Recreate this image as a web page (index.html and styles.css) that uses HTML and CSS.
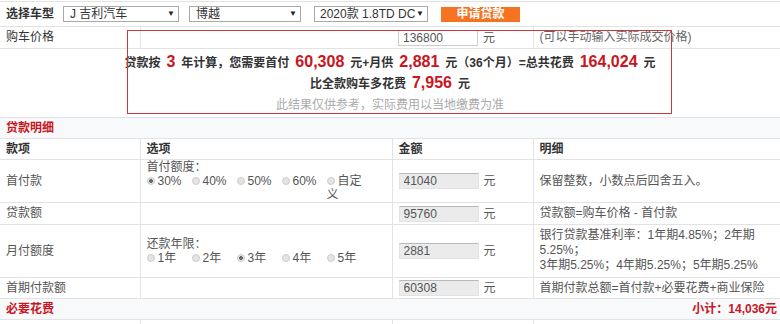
FILE: index.html
```html
<!DOCTYPE html>
<html lang="zh-CN">
<head>
    <meta charset="UTF-8">
    <title>贷款购车计算器</title>
    <link rel="stylesheet" href="styles.css">
</head>
<body>
    <div class="calc">
        <table class="loan-table">
            <colgroup>
                <col class="col-item">
                <col class="col-option">
                <col class="col-amount">
                <col class="col-detail">
            </colgroup>

            <tr class="pick-row">
                <td colspan="4">
                    <div class="pick">
                        <span class="pick-label">选择车型</span>
                        <div class="select select-brand"><span class="select-text">J 吉利汽车</span><span class="arrow">▼</span></div>
                        <div class="select select-series"><span class="select-text">博越</span><span class="arrow">▼</span></div>
                        <div class="select select-model"><span class="select-text">2020款 1.8TD DC</span><span class="arrow">▼</span></div>
                        <button class="apply-btn">申请贷款</button>
                    </div>
                </td>
            </tr>

            <tr class="price-row">
                <td class="label">购车价格</td>
                <td class="no-split-right"></td>
                <td class="no-split-left"><input class="price-input" value="136800"><span class="unit">元</span></td>
                <td class="note">(可以手动输入实际成交价格)</td>
            </tr>

            <tr class="result-row">
                <td colspan="4">
                    <div class="result-main">贷款按<span class="num">3</span>年计算，您需要首付<span class="num">60,308</span>元+月供<span class="num">2,881</span>元（36个月）=总共花费<span class="num">164,024</span>元</div>
                    <div class="result-main">比全款购车多花费<span class="num">7,956</span>元</div>
                    <div class="result-note">此结果仅供参考，实际费用以当地缴费为准</div>
                </td>
            </tr>

            <tr class="section">
                <td colspan="4">贷款明细</td>
            </tr>

            <tr class="head">
                <th>款项</th>
                <th>选项</th>
                <th>金额</th>
                <th>明细</th>
            </tr>

            <tr class="tall-a">
                <td>首付款</td>
                <td>
                    <div class="radio-block">
                        <div>首付额度：</div>
                        <div class="radio-group">
                            <div class="radio-item"><span class="radio checked"></span>30%</div>
                            <div class="radio-item"><span class="radio"></span>40%</div>
                            <div class="radio-item"><span class="radio"></span>50%</div>
                            <div class="radio-item"><span class="radio"></span>60%</div>
                            <div class="radio-item"><span class="radio"></span>自定义</div>
                        </div>
                    </div>
                </td>
                <td><input class="amount" value="41040" readonly><span class="unit">元</span></td>
                <td>保留整数，小数点后四舍五入。</td>
            </tr>

            <tr>
                <td>贷款额</td>
                <td></td>
                <td><input class="amount" value="95760" readonly><span class="unit">元</span></td>
                <td>贷款额=购车价格 - 首付款</td>
            </tr>

            <tr class="tall-b">
                <td>月付额度</td>
                <td>
                    <div class="radio-block">
                        <div>还款年限：</div>
                        <div class="radio-group">
                            <div class="radio-item"><span class="radio"></span>1年</div>
                            <div class="radio-item"><span class="radio"></span>2年</div>
                            <div class="radio-item"><span class="radio checked"></span>3年</div>
                            <div class="radio-item"><span class="radio"></span>4年</div>
                            <div class="radio-item"><span class="radio"></span>5年</div>
                        </div>
                    </div>
                </td>
                <td><input class="amount" value="2881" readonly><span class="unit">元</span></td>
                <td class="rates">银行贷款基准利率：1年期4.85%；2年期5.25%；<br>3年期5.25%；4年期5.25%；5年期5.25%</td>
            </tr>

            <tr>
                <td>首期付款额</td>
                <td></td>
                <td><input class="amount" value="60308" readonly><span class="unit">元</span></td>
                <td>首期付款总额=首付款+必要花费+商业保险</td>
            </tr>

            <tr class="section">
                <td colspan="4">
                    <div class="section-bar">
                        <span>必要花费</span>
                        <span>小计：14,036元</span>
                    </div>
                </td>
            </tr>

            <tr>
                <td></td>
                <td></td>
                <td></td>
                <td></td>
            </tr>
        </table>

        <div class="result-frame"></div>
    </div>
</body>
</html>
```

FILE: styles.css
```css
* {
    box-sizing: border-box;
}

body {
    margin: 0;
    font-family: "Liberation Sans", "Noto Sans CJK TC", sans-serif;
    font-size: 12px;
    color: #555;
    background: #fff;
}

.calc {
    position: relative;
    padding-top: 1px;
}

.loan-table {
    width: 780px;
    border-collapse: collapse;
    table-layout: fixed;
}

.col-item { width: 140px; }
.col-option { width: 252px; }
.col-amount { width: 141px; }
.col-detail { width: 247px; }

.loan-table td,
.loan-table th {
    border: 1px solid #e3e3e3;
    padding: 0 6px;
    height: 20px;
    line-height: 20px;
    text-align: left;
    vertical-align: middle;
    font-weight: normal;
}

.loan-table tr > :first-child {
    border-left: none;
}

.loan-table tr > :last-child {
    border-right: none;
}

/* top row: car picker */
.pick-row td {
    height: 25px;
}

.pick {
    display: flex;
    align-items: center;
}

.pick-label {
    width: 57px;
    font-weight: bold;
    color: #333;
}

.select {
    display: flex;
    align-items: center;
    height: 16px;
    padding: 0 3px 0 6px;
    border: 1px solid #a9a9a9;
    background: #fff;
    color: #333;
    line-height: 14px;
    white-space: nowrap;
}

.select-text {
    flex: 1;
    overflow: hidden;
}

.arrow {
    flex: none;
    margin-left: 2px;
    font-size: 8px;
    color: #222;
}

.select-brand { width: 116px; }
.select-series { width: 112px; margin-left: 10px; }
.select-model { width: 114px; margin-left: 13px; padding-left: 5px; }
.select-model .arrow { margin-left: 0; }

.apply-btn {
    width: 79px;
    height: 15px;
    margin-left: 13px;
    padding: 0;
    border: none;
    background: #f57321;
    color: #fff;
    font: bold 12px "Liberation Sans", "Noto Sans CJK TC", sans-serif;
    line-height: 15px;
}

/* price row */
.label {
    font-weight: bold;
    color: #333;
}

.loan-table .no-split-right {
    border-right: none;
}

.loan-table .no-split-left {
    border-left: none;
}

.price-input,
.amount {
    width: 80px;
    height: 16px;
    padding: 0 4px;
    font: 12px "Liberation Sans", "Noto Sans CJK TC", sans-serif;
    line-height: 14px;
    color: #555;
    vertical-align: middle;
    outline: none;
}

.price-input {
    border: 1px solid #ccc;
    background: #fff;
}

.amount {
    border: 1px solid #e2e2e2;
    border-top-color: #b8b8b8;
    background: #ebebeb;
}

.unit {
    margin-left: 5px;
    vertical-align: middle;
}

.note {
    color: #666;
}

/* result summary */
.loan-table .result-row td {
    padding: 4px 0 2px;
    text-align: center;
}

.result-main {
    line-height: 21px;
    font-weight: bold;
    color: #333;
}

.num {
    margin: 0 6px;
    font-size: 16px;
    line-height: 1;
    color: #c9151e;
}

.result-note {
    line-height: 20px;
    color: #aaa;
}

.result-frame {
    position: absolute;
    left: 127px;
    top: 30px;
    width: 545px;
    height: 84px;
    border: 1px solid #c9393e;
    pointer-events: none;
}

/* detail table */
.section td {
    background: #f7f9fb;
    color: #c9151e;
    font-weight: bold;
}

.section-bar {
    display: flex;
    justify-content: space-between;
    margin-right: -3px;
}

.loan-table .head th {
    font-weight: bold;
    color: #333;
}

.loan-table .tall-a td {
    height: 42px;
}

.loan-table .tall-b td {
    height: 53px;
}

.radio-block {
    line-height: 14px;
}

.radio-group {
    display: flex;
}

.radio-item {
    flex: none;
    width: 45px;
}

.radio {
    display: inline-block;
    width: 8px;
    height: 8px;
    margin-right: 3px;
    border: 1px solid #cdcdcd;
    border-radius: 50%;
    background: #e4e4e4;
    vertical-align: -0.5px;
}

.radio.checked {
    background: radial-gradient(circle, #6a6a6a 0 1.6px, #e4e4e4 2.2px);
}

.loan-table .rates {
    line-height: 15px;
}
```
